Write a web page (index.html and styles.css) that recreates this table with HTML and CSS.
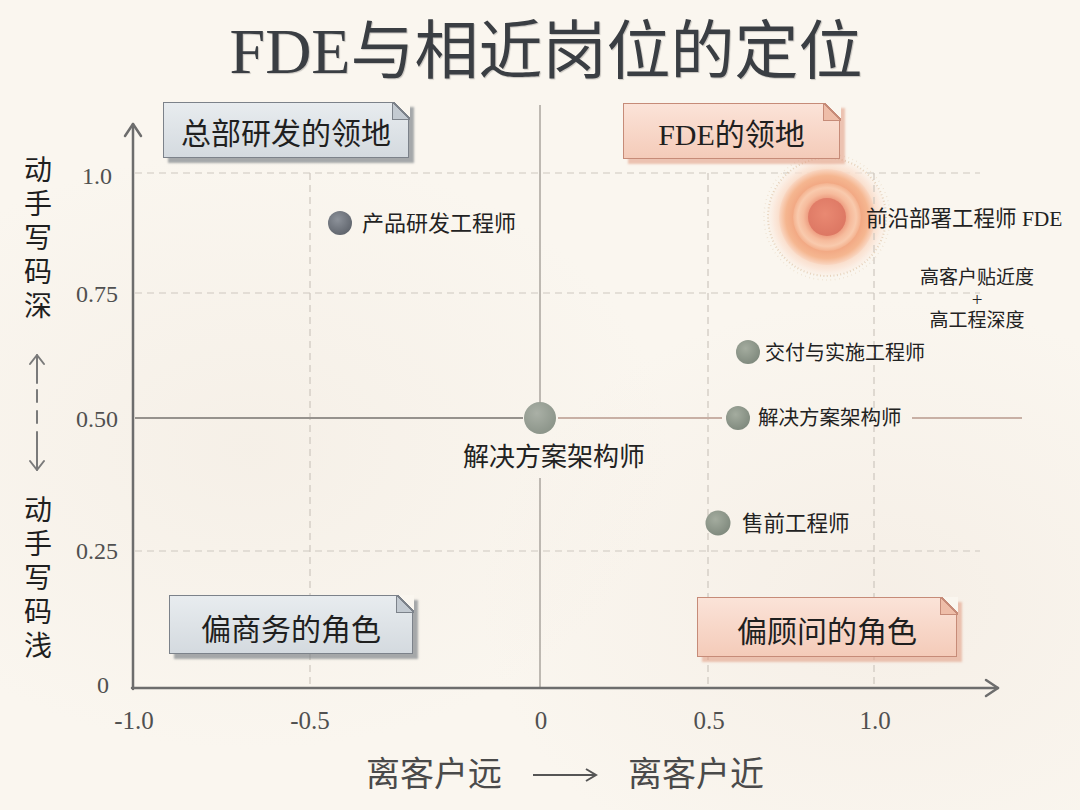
FILE: index.html
```html
<!DOCTYPE html>
<html lang="zh">
<head>
<meta charset="utf-8">
<title>FDE与相近岗位的定位</title>
<link rel="stylesheet" href="styles.css">
</head>
<body>
<div class="page">
  <h1 class="title">FDE与相近岗位的定位</h1>

  <div class="chart">
    <svg class="plot" width="1080" height="650" viewBox="0 0 1080 650">
      <defs>
        <radialGradient id="gBlue" cx="40%" cy="35%" r="70%">
          <stop offset="0" stop-color="#8d929a"/>
          <stop offset="1" stop-color="#5e636b"/>
        </radialGradient>
        <radialGradient id="gGreen" cx="40%" cy="35%" r="70%">
          <stop offset="0" stop-color="#a4ac9f"/>
          <stop offset="1" stop-color="#7e887c"/>
        </radialGradient>
        <radialGradient id="gBig" cx="40%" cy="35%" r="70%">
          <stop offset="0" stop-color="#aab0a6"/>
          <stop offset="1" stop-color="#8a9388"/>
        </radialGradient>
        <radialGradient id="gHalo">
          <stop offset="0.78" stop-color="#f9d8c2" stop-opacity="0.95"/>
          <stop offset="0.9" stop-color="#fbe3d4" stop-opacity="0.7"/>
          <stop offset="1" stop-color="#fbeee4" stop-opacity="0.35"/>
        </radialGradient>
        <radialGradient id="gOuter">
          <stop offset="0" stop-color="#f0a07d"/>
          <stop offset="0.7" stop-color="#f2a883"/>
          <stop offset="0.86" stop-color="#f5b690"/>
          <stop offset="0.95" stop-color="#f8cbb0"/>
          <stop offset="1" stop-color="#f9d7c3"/>
        </radialGradient>
        <radialGradient id="gMid">
          <stop offset="0" stop-color="#ec9a7f"/>
          <stop offset="0.56" stop-color="#ee9f82"/>
          <stop offset="0.7" stop-color="#f6bb9c"/>
          <stop offset="0.86" stop-color="#f9caad"/>
          <stop offset="1" stop-color="#f4b28f"/>
        </radialGradient>
        <radialGradient id="gCore" cx="45%" cy="42%" r="62%">
          <stop offset="0" stop-color="#e9887180"/>
          <stop offset="0" stop-color="#e98972"/>
          <stop offset="1" stop-color="#dc7662"/>
        </radialGradient>
      </defs>

      <!-- dashed grid -->
      <g class="grid">
        <line x1="135" y1="83" x2="980" y2="83"/>
        <line x1="135" y1="203" x2="980" y2="203"/>
        <line x1="135" y1="461" x2="980" y2="461"/>
        <line x1="310" y1="83" x2="310" y2="597"/>
        <line x1="708" y1="83" x2="708" y2="597"/>
      </g>

      <!-- 0.50 line -->
      <line class="mid-left" x1="135" y1="328" x2="523" y2="328"/>
      <line class="mid-right" x1="558" y1="328" x2="722" y2="328"/>
      <line class="mid-right" x1="912" y1="328" x2="1022" y2="328"/>

      <!-- centre vertical -->
      <line class="center-v" x1="540" y1="15" x2="540" y2="313"/>
      <line class="center-v" x1="540" y1="388" x2="540" y2="597"/>

      <!-- axes -->
      <g class="axis">
        <line x1="133" y1="599" x2="133" y2="34"/>
        <polyline points="125,46 133,34 141,46"/>
        <line x1="132" y1="598" x2="998" y2="598"/>
        <polyline points="986,590 998,598 986,606"/>
      </g>

      <!-- y side arrows -->
      <g class="side">
        <line x1="37" y1="265" x2="37" y2="293"/>
        <polyline points="30,274 37,265 44,274"/>
        <line x1="37" y1="300" x2="37" y2="312"/>
        <line x1="37" y1="321" x2="37" y2="333"/>
        <line x1="37" y1="342" x2="37" y2="380"/>
        <polyline points="30,371 37,380 44,371"/>
      </g>

      <!-- FDE glow -->
      <g class="fde">
        <circle cx="827" cy="127" r="59" fill="url(#gHalo)"/>
        <circle cx="827" cy="127" r="59" class="dust1"/>
        <circle cx="827" cy="127" r="63" class="dust2"/>
        <line class="grid-over" x1="874" y1="83" x2="874" y2="597"/>
        <circle cx="827" cy="127" r="48" fill="url(#gOuter)"/>
        <circle cx="827" cy="127" r="34" fill="url(#gMid)"/>
        <circle cx="827" cy="127" r="19" fill="url(#gCore)"/>
      </g>

      <!-- dots -->
      <circle cx="340" cy="133" r="12" fill="url(#gBlue)"/>
      <circle cx="748" cy="262" r="12" fill="url(#gGreen)"/>
      <circle cx="738" cy="328" r="12" fill="url(#gGreen)"/>
      <circle cx="540" cy="328" r="16" fill="url(#gBig)"/>
      <circle cx="718" cy="433" r="12.5" fill="url(#gGreen)"/>
    </svg>

    <div class="ylabel ylabel-top">动<br>手<br>写<br>码<br>深</div>
    <div class="ylabel ylabel-bottom">动<br>手<br>写<br>码<br>浅</div>

    <div class="ytick yt1">1.0</div>
    <div class="ytick yt2">0.75</div>
    <div class="ytick yt3">0.50</div>
    <div class="ytick yt4">0.25</div>
    <div class="ytick yt5">0</div>

    <div class="xtick xt1">-1.0</div>
    <div class="xtick xt2">-0.5</div>
    <div class="xtick xt3">0</div>
    <div class="xtick xt4">0.5</div>
    <div class="xtick xt5">1.0</div>

    <div class="card card-gray card-hq">总部研发的领地</div>
    <div class="card card-peach card-fde">FDE的领地</div>
    <div class="card card-gray card-biz">偏商务的角色</div>
    <div class="card card-peach card-con">偏顾问的角色</div>

    <div class="lbl l-prod">产品研发工程师</div>
    <div class="lbl l-fde">前沿部署工程师 FDE</div>
    <div class="lbl l-note">高客户贴近度<br>+<br>高工程深度</div>
    <div class="lbl l-deliv">交付与实施工程师</div>
    <div class="lbl l-sa">解决方案架构师</div>
    <div class="lbl l-sa-big">解决方案架构师</div>
    <div class="lbl l-pre">售前工程师</div>
  </div>

  <div class="caption">
    <span>离客户远</span>
    <svg class="cap-arrow" width="66" height="20" viewBox="0 0 66 20">
      <line x1="1" y1="10" x2="63" y2="10"/>
      <polyline points="54,4 64,10 54,16"/>
    </svg>
    <span>离客户近</span>
  </div>
</div>
</body>
</html>
```

FILE: styles.css
```css
* { box-sizing: border-box; }
html, body { margin: 0; padding: 0; }
body {
  width: 1080px;
  height: 810px;
  overflow: hidden;
  background: #faf5ee;
  font-family: "Liberation Serif", "Noto Sans CJK SC", sans-serif;
  color: #222;
}
.page {
  width: 1080px;
  height: 810px;
  display: flex;
  flex-direction: column;
  background:
    radial-gradient(ellipse 420px 300px at 250px 450px, rgba(240,232,222,0.45), transparent),
    radial-gradient(ellipse 400px 300px at 880px 600px, rgba(240,230,220,0.45), transparent),
    #faf6ef;
}
.title {
  margin: 0;
  height: 90px;
  flex: none;
  padding: 20px 0 0 12px;
  font-size: 64px;
  font-weight: 400;
  line-height: 1;
  text-align: center;
  color: #3a3e43;
  text-shadow: 1px 1px 1px rgba(0,0,0,0.2);
}
.chart {
  position: relative;
  height: 650px;
  flex: none;
}
.plot {
  position: absolute;
  left: 0;
  top: 0;
}
.grid line, .grid-over {
  stroke: #cec7bf;
  stroke-width: 1.2;
  stroke-dasharray: 7 5;
}
.mid-left { stroke: #96928d; stroke-width: 2; }
.mid-right { stroke: #c8b0a5; stroke-width: 2; }
.center-v { stroke: #aaa49e; stroke-width: 1.5; }
.axis line, .axis polyline {
  stroke: #6d6d6d;
  stroke-width: 2.5;
  fill: none;
  stroke-linecap: round;
  stroke-linejoin: round;
}
.side line, .side polyline {
  stroke: #7a7a7a;
  stroke-width: 2;
  fill: none;
  stroke-linecap: round;
  stroke-linejoin: round;
}
.dust1 {
  fill: none;
  stroke: #d5b48e;
  stroke-width: 2;
  stroke-dasharray: 1 2.4;
  opacity: 0.5;
}
.dust2 {
  fill: none;
  stroke: #dcc09e;
  stroke-width: 1.5;
  stroke-dasharray: 0.7 3.6;
  opacity: 0.4;
}

.ylabel {
  position: absolute;
  left: 21px;
  width: 34px;
  font-size: 28px;
  line-height: 34px;
  text-align: center;
  color: #1f1f1f;
}
.ylabel-top { top: 64px; }
.ylabel-bottom { top: 404px; }

.ytick {
  position: absolute;
  left: 66px;
  width: 62px;
  text-align: center;
  font-size: 24px;
  line-height: 24px;
  color: #505050;
}
.yt1 { top: 74px; }
.yt2 { top: 192px; }
.yt3 { top: 317px; }
.yt4 { top: 449px; }
.yt5 { top: 583px; left: 72px; }

.xtick {
  position: absolute;
  top: 618px;
  width: 70px;
  text-align: center;
  font-size: 25px;
  line-height: 25px;
  color: #505050;
}
.xt1 { left: 99px; }
.xt2 { left: 275px; }
.xt3 { left: 506px; }
.xt4 { left: 674px; }
.xt5 { left: 840px; }

.card {
  position: absolute;
  display: flex;
  align-items: center;
  justify-content: center;
  font-size: 30px;
  line-height: 1;
  color: #1f1f1f;
  border: 1.5px solid;
  white-space: nowrap;
}
.card::before {
  content: "";
  position: absolute;
  top: -1.5px;
  right: -1.5px;
  width: 17px;
  height: 17px;
  border-left: 1.5px solid var(--line);
  border-bottom: 1.5px solid var(--line);
  background: linear-gradient(to bottom left, #faf6ef 47%, var(--line) 47%, var(--line) 54%, var(--fold) 54%);
}
.card-gray {
  --line: #7c828a;
  --fold: #c3cad1;
  border-color: #7c828a;
  background: linear-gradient(#e8ecef, #d4dadf);
  box-shadow: 5px 5px 2px rgba(120,126,132,0.65);
}
.card-peach {
  --line: #c68b78;
  --fold: #eebda8;
  border-color: #c68b78;
  background: linear-gradient(#fbe3d8, #f4cbb9);
  box-shadow: 5px 5px 2px rgba(226,160,135,0.6);
}
.card-hq { left: 163px; top: 12px; width: 246px; height: 56px; padding-top: 8px; }
.card-fde { left: 623px; top: 13px; width: 217px; height: 56px; padding-top: 8px; }
.card-biz { left: 169px; top: 505px; width: 244px; height: 59px; padding-top: 11px; }
.card-con { left: 697px; top: 507px; width: 260px; height: 60px; padding-top: 10px; }

.lbl {
  position: absolute;
  line-height: 1;
  white-space: nowrap;
  color: #222;
}
.l-prod { left: 362px; top: 123px; font-size: 22px; }
.l-fde { left: 866px; top: 119px; font-size: 21.5px; }
.l-note {
  left: 917px;
  top: 177px;
  width: 120px;
  text-align: center;
  font-size: 19px;
  line-height: 21.5px;
}
.l-deliv { left: 765px; top: 253px; font-size: 20px; }
.l-sa { left: 758px; top: 318px; font-size: 20.5px; }
.l-sa-big { left: 463px; top: 355px; font-size: 26px; }
.l-pre { left: 742px; top: 424px; font-size: 21.5px; }

.caption {
  flex: none;
  height: 70px;
  display: flex;
  justify-content: center;
  align-items: center;
  gap: 30px;
  padding: 0 0 0 50px;
  font-size: 34px;
  line-height: 40px;
  color: #4a4a4a;
}
.cap-arrow line, .cap-arrow polyline {
  stroke: #555;
  stroke-width: 2;
  fill: none;
}
```
